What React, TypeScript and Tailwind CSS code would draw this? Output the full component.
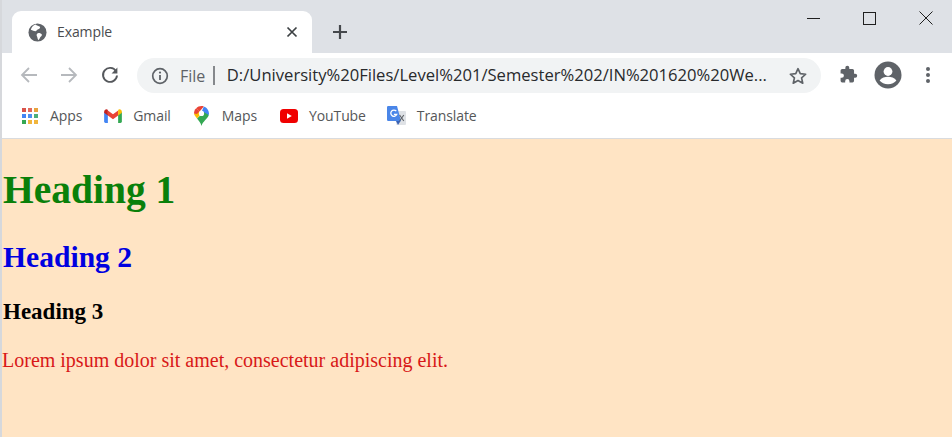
import React from "react";

const ui = { fontFamily: '"Open Sans", "Noto Sans", sans-serif' };

function Bookmark({ icon, label, className }: { icon: React.ReactNode; label: string; className: string }) {
  return (
    <div className={`flex items-center ${className}`}>
      <span className="flex h-[20px] w-[20px] shrink-0 items-center justify-center">{icon}</span>
      <span className="ml-[10px] whitespace-nowrap text-[14px] leading-none tracking-[-0.1px] text-[#555759]">{label}</span>
    </div>
  );
}

function AppsIcon() {
  const colors = ["#d9534a", "#e26a5c", "#e8a33d", "#4285f4", "#4f8ff0", "#4caf7a", "#34a853", "#f1b53c", "#f1b53c"];
  return (
    <span className="grid grid-cols-3 gap-[2px]">
      {colors.map((c, i) => (
        <span key={i} className="h-[4px] w-[4px]" style={{ background: c }} />
      ))}
    </span>
  );
}

function GmailIcon() {
  return (
    <svg width="18" height="14" viewBox="0 0 19 15">
      <path d="M0 3v10.5A1.5 1.5 0 0 0 1.5 15H4V6z" fill="#4285f4" />
      <path d="M19 3v10.5a1.5 1.5 0 0 1-1.5 1.5H15V6z" fill="#34a853" />
      <path d="M4 7V1.5L9.5 5.6 15 1.5V7L9.5 11z" fill="#ea4335" />
      <path d="M0 3.2C0 .8 2.6-.6 4 1v6L0 4z" fill="#c5221f" />
      <path d="M19 3.2C19 .8 16.4-.6 15 1v6l4-3z" fill="#fbbc04" />
    </svg>
  );
}

function MapsIcon() {
  return (
    <svg width="15" height="20" viewBox="0 0 15 20">
      <path d="M7.5 20C6.8 16.8 4.8 14.6 3 12.4L11.6 4.4l3.2 4.6C14 12.4 8.6 15.4 7.5 20z" fill="#34a853" />
      <path d="M3 12.4C1.4 10.6.2 9 0 7.5L5.4 5.6 6 9z" fill="#fbbc04" />
      <path d="M0 7.5C0 5.5.8 3.6 2.2 2.3L5.6 5.2 3 8z" fill="#ea4335" />
      <path d="M2.2 2.3C3.6.8 5.4 0 7.5 0c.8 0 1.6.1 2.3.4L5.6 5.4z" fill="#ea4335" />
      <path d="M9.8.4C12.8 1.4 15 4.2 15 7.5c0 .5-.1 1-.2 1.5L8 5z" fill="#4285f4" />
      <circle cx="7.5" cy="7.4" r="2.6" fill="#ffffff" />
    </svg>
  );
}

function YouTubeIcon() {
  return (
    <svg width="18" height="14" viewBox="0 0 18 14">
      <rect width="18" height="14" rx="3.5" fill="#f00000" />
      <path d="M7 4.2v5.6L11.8 7z" fill="#ffffff" />
    </svg>
  );
}

function TranslateIcon() {
  return (
    <svg width="20" height="20" viewBox="0 0 20 20">
      <path d="M7 5h11a1 1 0 0 1 1 1v12a1 1 0 0 1-1 1H9.5z" fill="#dfe2e6" />
      <path d="M1.2 0H10l4 15H1.2A1.2 1.2 0 0 1 0 13.8V1.2A1.2 1.2 0 0 1 1.2 0z" fill="#4a86e8" />
      <path d="M9 15h4.6L11 19z" fill="#3a62b5" />
      <path d="M9.3 5.2A3.1 3.1 0 1 0 9.8 8.3H6.9" fill="none" stroke="#ffffff" strokeWidth="1.3" />
      <path d="m12.6 9 4.2 6M16.8 9l-4.2 6" stroke="#5f6368" strokeWidth="1.1" />
    </svg>
  );
}

export default function App() {
  return (
    <div className="flex h-[437px] w-[952px] flex-col overflow-hidden border-l-2 border-l-[#d6d8dc] bg-white" style={ui}>
      {/* Tab strip */}
      <div className="flex h-[53px] items-end bg-[#dee1e6] pl-[10px]">
        <div className="flex h-[42px] w-[300px] items-center rounded-t-[9px] bg-white pl-[16px] pr-[14px]">
          <svg width="19" height="19" viewBox="0 0 20 20" className="shrink-0">
            <circle cx="10" cy="10" r="9.5" fill="#5f6368" />
            <path d="M8 1.6C9 3 11.5 3 12.6 4c.6 1-.6 2.4-2 2.6C9.2 7 9.4 8.4 8 8.6 6.4 8.8 5 7.4 3 7 3.6 4.4 5.4 2.4 8 1.6zM11 10.4c1.6 0 3.4.6 3.6 1.8.2 1.4-1.2 2.2-2 3.2-.6 1-.6 2-1.8 2.4-1-1.2-.6-2.6-1.4-3.8-.6-1.2-.4-3.4 1.6-3.6z" fill="#ffffff" />
          </svg>
          <span className="ml-[10px] text-[14px] leading-none tracking-[-0.1px] text-[#4a4c4f]">Example</span>
          <svg width="12" height="12" viewBox="0 0 12 12" className="ml-auto">
            <path d="M1.5 1.5l9 9M10.5 1.5l-9 9" stroke="#3c4043" strokeWidth="1.7" />
          </svg>
        </div>
        <svg width="16" height="16" viewBox="0 0 16 16" className="mb-[13px] ml-[20px]">
          <path d="M8 1v14M1 8h14" stroke="#45484c" strokeWidth="2.2" />
        </svg>
        <div className="mb-[28px] ml-auto flex items-center pr-[19px]">
          <span className="h-[1px] w-[13px] bg-[#1f1f1f]" />
          <span className="ml-[43px] h-[13px] w-[13px] border border-[#1f1f1f]" />
          <svg width="14" height="14" viewBox="0 0 14 14" className="ml-[43px]">
            <path d="M.5.5l13 13M13.5.5l-13 13" stroke="#1f1f1f" strokeWidth="1" />
          </svg>
        </div>
      </div>

      {/* Toolbar */}
      <div className="flex h-[43px] items-center pl-[18px]">
        <svg width="18" height="18" viewBox="0 0 18 18">
          <path d="M17 9H2M9 2 2 9l7 7" fill="none" stroke="#b6b9bd" strokeWidth="1.8" />
        </svg>
        <svg width="18" height="18" viewBox="0 0 18 18" className="ml-[22px]">
          <path d="M1 9h15M9 2l7 7-7 7" fill="none" stroke="#b6b9bd" strokeWidth="1.8" />
        </svg>
        <svg width="18" height="18" viewBox="0 0 18 18" className="ml-[23px]">
          <path d="M15 5.2A7 7 0 1 0 16 9.5" fill="none" stroke="#55585c" strokeWidth="1.9" />
          <path d="M16.4 1.6v5.8h-5.8z" fill="#55585c" />
        </svg>
        <div className="ml-[18px] mt-[2px] flex h-[35px] w-[684px] items-center rounded-full bg-[#f1f3f4] pl-[14px] pr-[13px]">
          <svg width="18" height="18" viewBox="0 0 18 18" className="shrink-0">
            <circle cx="9" cy="9" r="7.3" fill="none" stroke="#5f6368" strokeWidth="1.7" />
            <path d="M9 8v5" stroke="#5f6368" strokeWidth="1.8" />
            <circle cx="9" cy="5.6" r="1.1" fill="#5f6368" />
          </svg>
          <span className="ml-[11px] text-[16px] leading-none text-[#5f6368]">File</span>
          <span className="ml-[8px] h-[19px] w-[1.5px] bg-[#85888c]" />
          <span className="ml-[12px] whitespace-nowrap text-[16.6px] leading-none text-[#282a2c]">
            D:/University%20Files/Level%201/Semester%202/IN%201620%20We...
          </span>
          <svg width="20" height="20" viewBox="0 0 24 24" className="ml-auto shrink-0">
            <path d="M12 3.2l2.7 6 6.5.7-4.9 4.4 1.4 6.4L12 17.4l-5.7 3.3 1.4-6.4-4.9-4.4 6.5-.7z" fill="none" stroke="#5f6368" strokeWidth="2" strokeLinejoin="round" />
          </svg>
        </div>
        <svg width="19" height="19" viewBox="0 0 24 24" className="ml-[18px]">
          <path d="M20.5 11H19V7a2 2 0 0 0-2-2h-4V3.5a2.5 2.5 0 0 0-5 0V5H4a2 2 0 0 0-2 2v3.8h1.5a2.7 2.7 0 0 1 0 5.4H2V20a2 2 0 0 0 2 2h3.8v-1.5a2.7 2.7 0 0 1 5.4 0V22H17a2 2 0 0 0 2-2v-4h1.5a2.5 2.5 0 0 0 0-5z" fill="#5f6368" />
        </svg>
        <svg width="28" height="28" viewBox="0 0 28 28" className="ml-[16px]">
          <circle cx="14" cy="14" r="13.5" fill="#5f6368" />
          <circle cx="14" cy="10.5" r="4.4" fill="#ffffff" />
          <path d="M5.6 19.4C7.4 16.8 11 15.8 14 15.8s6.6 1 8.4 3.6C20.6 21.8 17.6 23.2 14 23.2s-6.6-1.4-8.4-3.8z" fill="#ffffff" />
        </svg>
        <span className="ml-[24px] flex flex-col gap-[2px]">
          <span className="h-[4px] w-[4px] rounded-full bg-[#5f6368]" />
          <span className="h-[4px] w-[4px] rounded-full bg-[#5f6368]" />
          <span className="h-[4px] w-[4px] rounded-full bg-[#5f6368]" />
        </span>
      </div>

      {/* Bookmarks */}
      <div className="flex h-[43px] items-center border-b border-b-[#d9dbde] pb-[3px] pl-[18px]">
        <Bookmark icon={<AppsIcon />} label="Apps" className="" />
        <Bookmark icon={<GmailIcon />} label="Gmail" className="ml-[21px]" />
        <Bookmark icon={<MapsIcon />} label="Maps" className="ml-[21px]" />
        <Bookmark icon={<YouTubeIcon />} label="YouTube" className="ml-[22px]" />
        <Bookmark icon={<TranslateIcon />} label="Translate" className="ml-[21px]" />
      </div>

      {/* Page */}
      <div className="flex-1 bg-[#ffe4c4] font-['Liberation_Serif',serif]">
        <h1 className="ml-[1px] mt-[29px] text-[39.5px] font-bold leading-[45px] text-[#0a800a]">Heading 1</h1>
        <h2 className="ml-[1px] mt-[27px] text-[29.6px] font-bold leading-[34px] text-[#0000e0]">Heading 2</h2>
        <h3 className="ml-[1px] mt-[25px] text-[23px] font-bold leading-[26px] text-black">Heading 3</h3>
        <p className="mt-[24px] text-[20px] leading-[23px] text-[#d81818]">Lorem ipsum dolor sit amet, consectetur adipiscing elit.</p>
      </div>
    </div>
  );
}
